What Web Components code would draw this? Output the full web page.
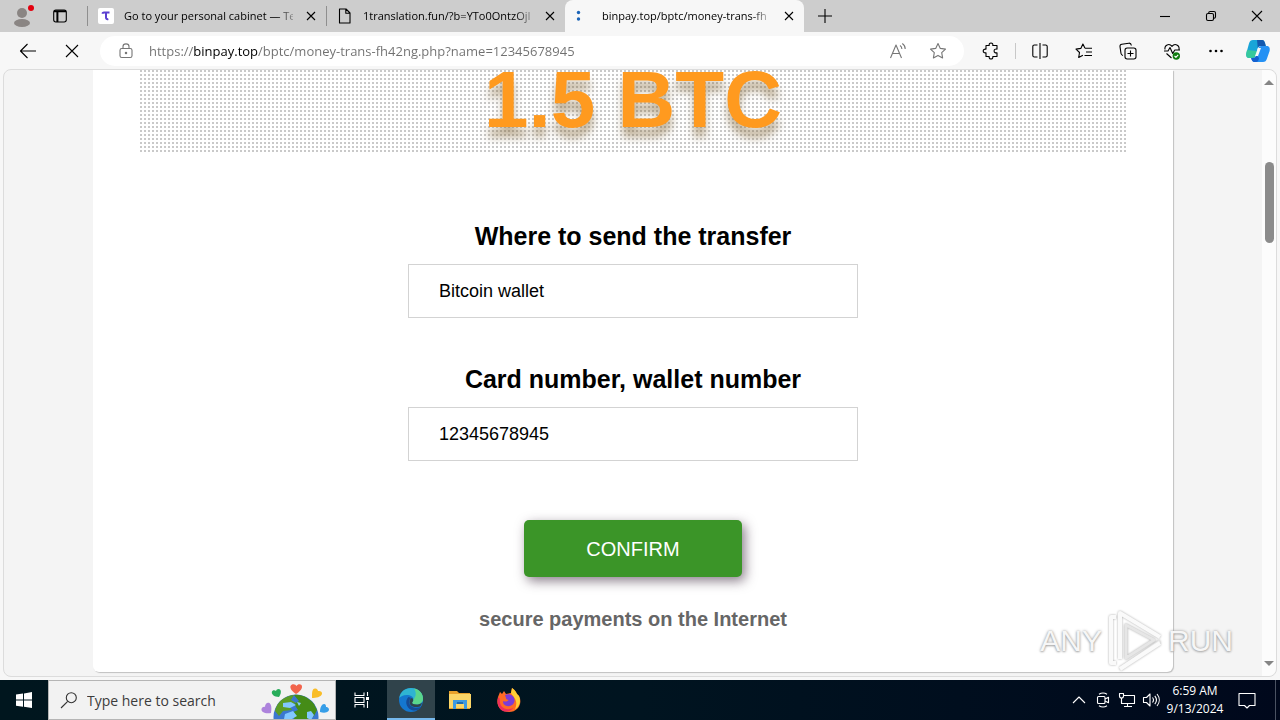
<!DOCTYPE html>
<html lang="en">
<head>
<meta charset="utf-8">
<title>binpay.top</title>
<style>
  html, body { height: 100%; }
  body {
    margin: 0;
    display: flex;
    flex-direction: column;
    background: #f7f7f7;
    font-family: "Open Sans", "Noto Sans", sans-serif;
    font-size: 12px;
    color: #000;
    overflow: hidden;
  }
</style>
</head>
<body>
<tab-strip>
  <browser-tab icon="tau">Go to your personal cabinet — Te</browser-tab>
  <browser-tab icon="file">1translation.fun/?b=YTo0OntzOjI</browser-tab>
  <browser-tab icon="loading" active>binpay.top/bptc/money-trans-fh</browser-tab>
</tab-strip>
<tool-bar></tool-bar>
<page-view>
  <pay-sheet>
    <pay-amount>1.5 BTC</pay-amount>
    <pay-field kind="select" label="Where to send the transfer" value="Bitcoin wallet"></pay-field>
    <pay-field label="Card number, wallet number" value="12345678945"></pay-field>
    <pay-button>CONFIRM</pay-button>
    <pay-note>secure payments on the Internet</pay-note>
  </pay-sheet>
</page-view>
<task-bar></task-bar>

<script>
const ICONS = {
  profile: [24, `<g stroke="none"><circle cx="11" cy="9" r="5" fill="#8a8583"/><ellipse cx="11" cy="19" rx="8" ry="4" fill="#8a8583"/><circle cx="20" cy="4" r="3" fill="#e3000f"/></g>`],
  workspace: [16, `<rect x="1.7" y="2" width="12.6" height="12" rx="2.2"/><path d="M2 3.2h12M5.4 3v11" stroke-width="2"/>`],
  tau: [16, `<rect width="16" height="16" rx="2" fill="#fff" stroke="none"/><path d="M4.200 5.600c.4-.8.900-1.100 1.700-1.100h5.600M8 5v4.400c0 1.600.9 2 2.300 1.600" stroke="#5b3fd0" stroke-width="2"/>`],
  file: [16, `<path d="M3.500 1h5.500l4 4v10H2.500V1zM8.800 1v4.300H13"/>`],
  loading: [16, `<g fill="#1b64b8" stroke="none"><circle cx="2.500" cy="4.500" r="1.700"/><circle cx="2.500" cy="11" r="1.700"/></g>`],
  close: [16, `<path d="M4 4l8 8M12 4l-8 8"/>`],
  plus: [16, `<path d="M8 1v14M1 8h14"/>`],
  minimize: [16, `<path d="M3 8.500h10"/>`],
  restore: [16, `<rect x="3.500" y="5.500" width="7" height="7" rx="1.500"/><path d="M5.700 5.300V5c0-1 .5-1.500 1.500-1.500H11c1 0 1.500.6 1.500 1.500v3.800c0 1-.5 1.500-1.500 1.500"/>`],
  exit: [16, `<path d="M3 3l10 10M13 3L3 13"/>`],
  back: [20, `<path d="M18 10H2.500M9.500 3L2.500 10l7 7"/>`],
  stop: [20, `<path d="M4 4l12 12M16 4L4 16"/>`],
  lock: [16, `<rect x="2" y="5.500" width="12" height="9" rx="1.800"/><path d="M5 5.500V3.600C5 2 6.200 .9 8 .9s3 1.100 3 2.700v1.900"/><circle cx="8" cy="10" r=".7" fill="currentColor"/>`],
  read: [18, `<path d="M1.500 16L7 3l5.500 13M3.500 11.500h7M11 3.500c1.300.8 1.900 2 1.900 3.500M13.300 1.500c2 1.300 2.900 3.200 2.900 5.500"/>`],
  star: [18, `<path d="M9 1.600l2.300 4.800 5.200.7-3.800 3.600.9 5.200L9 13.400l-4.600 2.500.9-5.200L1.500 7.100l5.200-.7z"/>`],
  puzzle: [18, `<path d="M4 3.500h3.200C6.900 1.900 7.700 1 9 1s2.100.9 1.800 2.500H15v3.600c-1.900-.3-2.900.5-2.900 1.800s1 2.200 2.900 1.900v3.700h-4.200c.3 1.600-.5 2.500-1.800 2.500s-2.100-.9-1.800-2.500H4v-3.700C2.300 11.100 1.200 10.300 1.200 9S2.300 6.900 4 7.200z"/>`],
  split: [18, `<path d="M6.500 3H3.400C2.400 3 1.800 3.600 1.800 4.600v8.800c0 1 .6 1.600 1.600 1.600h3.100M11.500 3h3.100c1 0 1.600.6 1.600 1.600v8.800c0 1-.6 1.600-1.600 1.600h-3.100M9 1v16"/>`],
  favorites: [18, `<path d="M10 6.300L7.900 2 5.800 6.400 1 7.100l3.500 3.400-.8 5 4.200-2.300M10 6.300h7M11 10h6M9.500 13.500H17"/>`],
  collections: [18, `<rect x="6" y="6" width="11" height="11" rx="2.200"/><path d="M11.500 8.500v6M8.500 11.500h6M4 13.500c-1.300-.3-1.800-1-2-2L1 4.700c-.2-1.400.5-2.300 1.800-2.500l7-1c1.400-.2 2.300.5 2.600 2.300"/>`],
  heart: [18, `<path d="M2 7.500C1.200 3 6.200 .8 9 4.300 11.800 .8 16.800 3 16 7.500M1 9h4l2-3.500 2.700 6L11.800 8H17M3.500 11.500L8.500 16"/><circle cx="13.300" cy="14" r="3.700" fill="#107c10" stroke="none"/><path d="M11.500 14l1.400 1.300 2.300-2.500" stroke="#fff"/>`],
  dots: [18, `<g fill="currentColor" stroke="none"><circle cx="3.500" cy="9" r="1.300"/><circle cx="9" cy="9" r="1.300"/><circle cx="14.500" cy="9" r="1.300"/></g>`],
  copilot: [26, `<g stroke="none"><path d="M8 2h9c2 0 2.500 1.500 3 3l.8 3h-5c-2 0-2.800 1-3.300 3l-1.600 6c-.5 2-1.300 3-3.400 3H4.200C1.600 20 .8 17.800 1.400 15L4 5.500C4.700 3 5.900 2 8 2z" fill="#19a5d8"/><path d="M2 12l-.6 3c-.6 2.800.2 5 2.800 5h3.300c2.100 0 2.900-1 3.400-3L12 13z" fill="#36c99c"/><path d="M12 2h5c2 0 2.500 1.500 3 3l.8 3h-5c-1.500 0-2.500.6-3 2z" fill="#1358ae"/><path d="M18 24H9.500c-2 0-2.500-1.500-3-3l-.4-1h2c2 0 2.800-1 3.300-3l1.700-6c.5-2 1.300-3 3.400-3h5.300c2.600 0 3.400 2.200 2.800 5L22 20.500c-.7 2.500-1.900 3.500-4 3.500z" fill="#2491f4"/><path d="M6.100 20h2c2 0 2.800-1 3.300-3L14 20c-.5 3-1.500 4-3 4H9.500c-2 0-2.900-2-3.400-4z" fill="#1560cf"/><path d="M13 10h3l-3 8h-3z" fill="#f7f7f7"/></g>`],
  windows: [18, `<path d="M1 3.500l7-1V8.600H1zM9 2.400L17 1v7.600H9zM1 9.500h7v6.200l-7-1zM9 9.500h8V17l-8-1.200z" fill="#fff" stroke="none"/>`],
  search: [18, `<circle cx="11.300" cy="6.700" r="5"/><path d="M7.700 10.300L1 17"/>`],
  taskview: [18, `<path d="M2 1.500v3h9v-3M2 16.500v-3h9v3M2 6.500h9v5H2zM14.500 1v4M14.500 10v7"/><path d="M13 6h3v3h-3z" fill="currentColor" stroke="none"/>`],
  edge: [26, `<g stroke="none"><circle cx="13" cy="13" r="12" fill="#1477cf"/><path d="M1.200 11C2.500 4.500 7 1 13 1c7 0 12 5 12 10.500 0 4-3 6-6.500 6-2.500 0-4.500-.8-4.500-1.800 0-.8 1.400-1.200 1.400-3.200C15.400 9.700 12.500 8 9 8c-4 0-6.500 1.500-7.800 3z" fill="#2fb4d2"/><path d="M16 1.500c5.500 1 9 5.300 9 10 0 4-3 6-6.500 6-2.500 0-4.500-.8-4.500-1.800 0-.8 1.400-1.200 1.400-3.200 3-3.500 3-7.500.6-11z" fill="#5bd68c"/><path d="M10.500 10c-4 4-2.500 10.500 3 13 4 1.500 8 .2 10-3.200-5 2.200-11.500 1-12.300-4-.3-2.200.5-3.800 2.300-4.800z" fill="#164b94"/><path d="M11.500 15c0-2 1-3.500 2.500-4 1.800 1.400 1.500 3 .2 4.400-.4 1 1.500 2 4.300 2.100 2 0 4-.5 5.500-2-.5 2-1 3-2 4-6 1.800-10.500-.5-10.500-4.500z" fill="#30434b"/></g>`],
  folder: [24, `<g stroke="none"><path d="M1 3h8l2 2h11v16H1z" fill="#e9a22b"/><path d="M1 6h22v14H1z" fill="#fcd667"/><path d="M5 12h14v9h-3v-5H8v5H5z" fill="#3f9adf"/><path d="M9 14h6v2H9z" fill="#1f6cb0"/></g>`],
  firefox: [26, `<g stroke="none"><path d="M4 5l2 2 2-3 2 3 5-1 1-5c3 2 4 4 5 6l2 2c4 7-1 16-10 16S-.500 18 2 10z" fill="#ff6a24"/><path d="M16 1c3 2 4 4 5 6l2 2c2.500 6 0 11-4 13.500C23 13 17 10 15 6z" fill="#ffcf35"/><path d="M2.500 10c3 2-1 8 6 11.500 3 1.500 7 .5 9-1-2 3.500-6 4.500-9 4C3 23 0 16.500 2.500 10z" fill="#f02e5c"/><path d="M9 8c5-2 10 1 9.500 6-.4 4-5 6.500-9 4.500-2-1-3-3-2-4.500 2 1 4 .5 5-1-2-.5-2.500-1-2.500-2z" fill="#7b3cd8"/></g>`],
  chevron: [16, `<path d="M2 11l6-6 6 6"/>`],
  meet: [16, `<rect x="2.500" y="4.500" width="7.500" height="7" rx="1"/><path d="M10 7l3.500-1.800v5.600L10 9M4 2.300c2.500-1.700 5.500-1.700 8 0M4 13.700c2.500 1.700 5.500 1.700 8 0"/>`],
  network: [18, `<path d="M5.500 4.500h11v8h-13V9M9.500 12.500v3M6 15.500h8"/><path d="M1.500 2.500h4V5c0 1-1 2-2 2s-2-1-2-2zM3.500 7v5"/>`],
  sound: [18, `<path d="M1.500 6.500h3l3.500-3.500v12l-3.500-3.500h-3zM10.500 6.500c1.200 1.500 1.200 3.500 0 5M12.800 4.800c2 2.500 2 5.900 0 8.400M15 3c3 3.600 3 8.400 0 12"/>`],
  message: [20, `<path d="M2 3.500h16v12h-5.500L10 18l-2.500-2.500H2z"/>`],
};

const GLOBE = `<svg width="72" height="38" viewBox="0 0 72 38" aria-hidden="true">
  <circle cx="37" cy="36" r="22.500" fill="#3b77cf"/>
  <path d="M16 30c2-9 9-15 19-16l-3 5 5 3-7 2 3 5-9 1-4 5z" fill="#5c9c24"/>
  <path d="M35 14c8-1 15 3 20 9l3 6-3 6-6 4H36l-4-7 7-3-4-6 5-3z" fill="#458c17"/>
  <path d="M24 22l8-1 5 3-6 3-7-1zM48 31l4-1 3 4-3 5-4-2zM38 21l4 1-2 3zM26 33l8-3 4 5-5 3h-8z" fill="#82c7ff"/>
  <path d="M37 13c-6-4-7-8-4-9.500 2-1 4 .3 4.500 1.500C38.500 3 41 2.500 42.500 4c2 3-2 7-5.500 9z" fill="#f2644c"/>
  <path d="M20 16c-5 0-8-3-7-5.500 1-2 3-1.500 4-.5.5-2 3-3 4.500-1 1 2 0 5-1.500 7z" fill="#28ad5a"/>
  <path d="M53 17c0-6 0-9 3-9.500 2-.2 3 1.500 3 2.500 2-.5 4.500.5 4 3-1 3-6 4-10 4z" fill="#f9bd28"/>
  <path d="M12 32c-6 1-10-1-9.500-4C3 26 5 25.500 6 26c0-3 2-5 4.500-4 2.500 2 2 7 1.500 10z" fill="#ad83dc"/>
  <path d="M61 31c0-5 2-8 4-8s2 2 2 3c2 0 4 2 2.500 4-2 2-5 2-8.500 1z" fill="#369ee8"/>
</svg>`;

// Small base: shared reset plus one render per element
class BaseElement extends HTMLElement {
  connectedCallback() {
    if (this.shadowRoot) return;
    this.attachShadow({ mode: 'open' });
    this.shadowRoot.innerHTML = `
      <style>
        *, *::before { box-sizing: border-box; }
        button, input, select { font: inherit; color: inherit; margin: 0; border: 0; padding: 0; background: none; }
        button { display: grid; place-items: center; }
        ${this.styles()}
      </style>
      ${this.markup()}
    `;
  }

  styles() { return ''; }
  markup() { return '<slot></slot>'; }
}

class UiIcon extends BaseElement {
  styles() {
    return `
      :host { display: inline-flex; flex: none; }
      svg { fill: none; stroke: currentColor; stroke-width: 1.1; stroke-linejoin: round; display: block; }
    `;
  }

  markup() {
    const [size, body] = ICONS[this.getAttribute('name')];
    return `<svg width="${size}" height="${size}" viewBox="0 0 ${size} ${size}" aria-hidden="true">${body}</svg>`;
  }
}

class TabStrip extends BaseElement {
  styles() {
    return `
      :host { display: flex; flex: none; height: 32px; background: #cdcdcd; }
      .lead { display: flex; align-items: center; gap: 17px; width: 87px; padding-left: 11px; }
      .lead button:last-child { width: 16px; }
      .new { width: 42px; }
      .window { display: flex; margin-left: auto; }
      .window button { width: 46px; }
    `;
  }

  markup() {
    return `
      <div class="lead">
        <button aria-label="Profile"><ui-icon name="profile"></ui-icon></button>
        <button aria-label="Tab actions"><ui-icon name="workspace"></ui-icon></button>
      </div>
      <slot></slot>
      <button class="new" aria-label="New tab"><ui-icon name="plus"></ui-icon></button>
      <div class="window">
        <button aria-label="Minimize"><ui-icon name="minimize"></ui-icon></button>
        <button aria-label="Restore"><ui-icon name="restore"></ui-icon></button>
        <button aria-label="Close window"><ui-icon name="exit"></ui-icon></button>
      </div>
    `;
  }
}

class BrowserTab extends BaseElement {
  styles() {
    return `
      :host {
        display: flex; align-items: center; gap: 10px;
        flex: 0 1 239px; min-width: 0; padding: 0 7px 0 10px;
        box-sizing: border-box; border-left: 1px solid #8f8f8f;
        border-image: linear-gradient(transparent 20%, #8f8f8f 20% 80%, transparent 80%) 1;
      }
      :host([active]) { background: #f7f7f7; border: 0; padding-left: 11px; border-radius: 8px 8px 0 0; }
      .title {
        overflow: hidden; white-space: nowrap; font-size: 11px; line-height: 16px;
        mask-image: linear-gradient(to left, rgba(0, 0, 0, .3), #000 16px);
      }
      button { width: 16px; margin-left: auto; }
    `;
  }

  markup() {
    return `
      <ui-icon name="${this.getAttribute('icon')}"></ui-icon>
      <span class="title"><slot></slot></span>
      <button aria-label="Close tab"><ui-icon name="close"></ui-icon></button>
    `;
  }
}

class ToolBar extends BaseElement {
  styles() {
    return `
      :host { display: flex; flex: none; align-items: center; height: 37px; padding: 0 2px 0 6px; background: #f7f7f7; }
      button { width: 44px; height: 30px; }
      address-bar { flex: 1; margin: 0 5px 0 6px; }
      i { width: 1px; height: 16px; margin: 0 2px; background: #c8c8c8; }
      button:last-child { width: 40px; }
    `;
  }

  markup() {
    const button = ([name, label]) => `<button aria-label="${label}"><ui-icon name="${name}"></ui-icon></button>`;
    return `
      ${[['back', 'Back'], ['stop', 'Stop']].map(button).join('')}
      <address-bar></address-bar>
      ${button(['puzzle', 'Extensions'])}
      <i></i>
      ${[
        ['split', 'Split screen'],
        ['favorites', 'Favorites'],
        ['collections', 'Collections'],
        ['heart', 'Browser essentials'],
        ['dots', 'Settings and more'],
        ['copilot', 'Copilot'],
      ].map(button).join('')}
    `;
  }
}

class AddressBar extends BaseElement {
  styles() {
    // the host name is darker than the rest of the address
    return `
      :host { display: flex; align-items: center; height: 30px; padding: 0 6px 0 18px; border-radius: 15px; background: #fff; color: #767676; }
      input {
        flex: 1; min-width: 0; margin-left: 15px; height: 20px; font-size: 13px; outline: 0;
        color: transparent;
        background: linear-gradient(to right, #707070 44px, #000 44px 109px, #707070 109px);
        -webkit-background-clip: text;
        background-clip: text;
      }
      button { width: 40px; height: 30px; }
    `;
  }

  markup() {
    return `
      <ui-icon name="lock"></ui-icon>
      <input type="text" aria-label="Address" value="https://binpay.top/bptc/money-trans-fh42ng.php?name=12345678945">
      <button aria-label="Read aloud"><ui-icon name="read"></ui-icon></button>
      <button aria-label="Add to favorites"><ui-icon name="star"></ui-icon></button>
    `;
  }
}

class PageView extends BaseElement {
  styles() {
    return `
      :host {
        position: relative; display: flex; flex: 1; min-height: 0; margin: 0 3px 3px;
        border: 1px solid #dcdcdc; border-radius: 8px; background: #f4f4f4;
        font-family: "Liberation Sans", Arial, sans-serif;
      }
      main { flex: 1; min-width: 0; }
      .scroll {
        display: flex; flex-direction: column; align-items: center; width: 14px; padding: 10px 0;
        border-radius: 0 8px 8px 0; background: #fcfcfc;
      }
      .up, .down { border: 5px solid transparent; border-top: 0; border-bottom: 5px solid #858585; }
      .down { border-top: 5px solid #858585; border-bottom: 0; margin-top: auto; }
      .thumb { width: 9px; height: 81px; margin-top: 77px; border-radius: 5px; background: #8b8b8b; }
      any-mark { position: absolute; right: 43px; bottom: 3px; }
    `;
  }

  markup() {
    return `
      <main><slot></slot></main>
      <div class="scroll"><div class="up"></div><div class="thumb"></div><div class="down"></div></div>
      <any-mark></any-mark>
    `;
  }
}

class AnyMark extends BaseElement {
  styles() {
    return `
      :host {
        display: flex; align-items: center; gap: 4px; pointer-events: none;
        font: 30px/64px "Liberation Sans Narrow", "Liberation Sans", sans-serif;
        color: #f6f6f6; text-shadow: 0 0 3px #999, 0 1px 2px #bbb;
      }
      svg { display: block; fill: none; filter: drop-shadow(0 0 1px #aaa); }
    `;
  }

  markup() {
    return `
      <span>ANY</span>
      <svg width="58" height="64" viewBox="0 0 58 64" aria-hidden="true">
        <path d="M14 60l40-28M20 16l28 15-28 18z" stroke="#e6e6e6" stroke-width="3" stroke-linejoin="round"/>
        <path d="M10 8H5v46h5M14 50V4l40 24M14 60l40-26" stroke="#fafafa" stroke-width="4" stroke-linejoin="round"/>
      </svg>
      <span>RUN</span>
    `;
  }
}

class PaySheet extends BaseElement {
  styles() {
    return `
      :host {
        display: flex; flex-direction: column; align-items: center; box-sizing: border-box;
        max-width: 1080px; margin: 0 auto; padding: 0 45px 41px;
        border-radius: 0 0 6px 6px; background: #fff; box-shadow: 1px 1px 1px #c0c0c0;
      }
    `;
  }
}

class PayAmount extends BaseElement {
  styles() {
    return `
      :host {
        align-self: stretch; display: block; padding-bottom: 24px; margin-bottom: 66px;
        background: conic-gradient(#c9c9c9 25%, #fff 0) 0 0 / 4px 4px;
        text-align: center;
      }
      h1 { margin: 0; font-size: 80px; line-height: 60px; color: #ff9a1f; text-shadow: 0 10px 8px rgba(130, 100, 50, .5); }
    `;
  }

  markup() { return '<h1><slot></slot></h1>'; }
}

class PayField extends BaseElement {
  styles() {
    return `
      :host { display: flex; flex-direction: column; align-items: center; gap: 12px; width: 450px; max-width: 100%; margin-bottom: 45px; }
      label { font-size: 25px; line-height: 32px; font-weight: bold; }
      input, select {
        width: 100%; height: 54px; padding: 0 30px; border: 1px solid #d3d3d3; border-radius: 0;
        background: #fff; font-size: 18px; appearance: none;
      }
    `;
  }

  markup() {
    const value = this.getAttribute('value');
    const control = this.getAttribute('kind') === 'select'
      ? `<select id="control"><option>${value}</option></select>`
      : `<input id="control" type="text" value="${value}">`;
    return `<label for="control">${this.getAttribute('label')}</label>${control}`;
  }
}

class PayButton extends BaseElement {
  styles() {
    return `
      :host { display: block; margin: 14px 0 30px; }
      button {
        width: 218px; height: 57px; padding-top: 2px; border-radius: 5px; background: #3b9528; color: #fff;
        font-size: 20px; box-shadow: 3px 4px 12px rgba(60, 40, 60, .6);
      }
    `;
  }

  markup() { return '<button type="button"><slot></slot></button>'; }
}

class PayNote extends BaseElement {
  styles() { return ':host { font-size: 20px; line-height: 24px; font-weight: bold; color: #666; }'; }
}

class TaskBar extends BaseElement {
  styles() {
    return `
      :host { display: flex; flex: none; height: 40px; background: linear-gradient(to right, #00161e, #001420 50%, #00081c); color: #fff; }
      button { width: 48px; }
      .search {
        display: flex; align-items: center; gap: 9px; width: 288px; padding: 0 4px 0 11px;
        overflow: hidden; border: 1px solid #b5b5b5; background: #f2f2f2; color: #333;
      }
      .search input { flex: 1; min-width: 0; font-size: 14px; outline: 0; }
      .search input::placeholder { color: #3c3c3c; opacity: 1; }
      .search svg { flex: none; }
      .apps { display: flex; gap: 1px; padding-left: 2px; }
      .apps .open { background: #30434b; box-shadow: inset 0 -2px #76b9ed; }
      .tray { display: flex; margin-left: auto; padding-right: 8px; border-right: 1px solid #4a5262; margin-right: 4px; }
      .tray button { width: 24px; }
      .tray .clock { display: block; width: 64px; text-align: center; line-height: 18px; }
      .tray .notes { width: 40px; }
    `;
  }

  markup() {
    return `
      <button aria-label="Start"><ui-icon name="windows"></ui-icon></button>
      <div class="search">
        <ui-icon name="search"></ui-icon>
        <input type="text" placeholder="Type here to search" aria-label="Search">
        ${GLOBE}
      </div>
      <div class="apps">
        <button aria-label="Task view"><ui-icon name="taskview"></ui-icon></button>
        <button class="open" aria-label="Edge"><ui-icon name="edge"></ui-icon></button>
        <button aria-label="File Explorer"><ui-icon name="folder"></ui-icon></button>
        <button aria-label="Firefox"><ui-icon name="firefox"></ui-icon></button>
      </div>
      <div class="tray">
        <button aria-label="Hidden icons"><ui-icon name="chevron"></ui-icon></button>
        <button aria-label="Meet now"><ui-icon name="meet"></ui-icon></button>
        <button aria-label="Network"><ui-icon name="network"></ui-icon></button>
        <button aria-label="Volume"><ui-icon name="sound"></ui-icon></button>
        <button class="clock">6:59 AM<br>9/13/2024</button>
        <button class="notes" aria-label="Notifications"><ui-icon name="message"></ui-icon></button>
      </div>
    `;
  }
}

customElements.define('ui-icon', UiIcon);
customElements.define('tab-strip', TabStrip);
customElements.define('browser-tab', BrowserTab);
customElements.define('tool-bar', ToolBar);
customElements.define('address-bar', AddressBar);
customElements.define('page-view', PageView);
customElements.define('any-mark', AnyMark);
customElements.define('pay-sheet', PaySheet);
customElements.define('pay-amount', PayAmount);
customElements.define('pay-field', PayField);
customElements.define('pay-button', PayButton);
customElements.define('pay-note', PayNote);
customElements.define('task-bar', TaskBar);
</script>
</body>
</html>
